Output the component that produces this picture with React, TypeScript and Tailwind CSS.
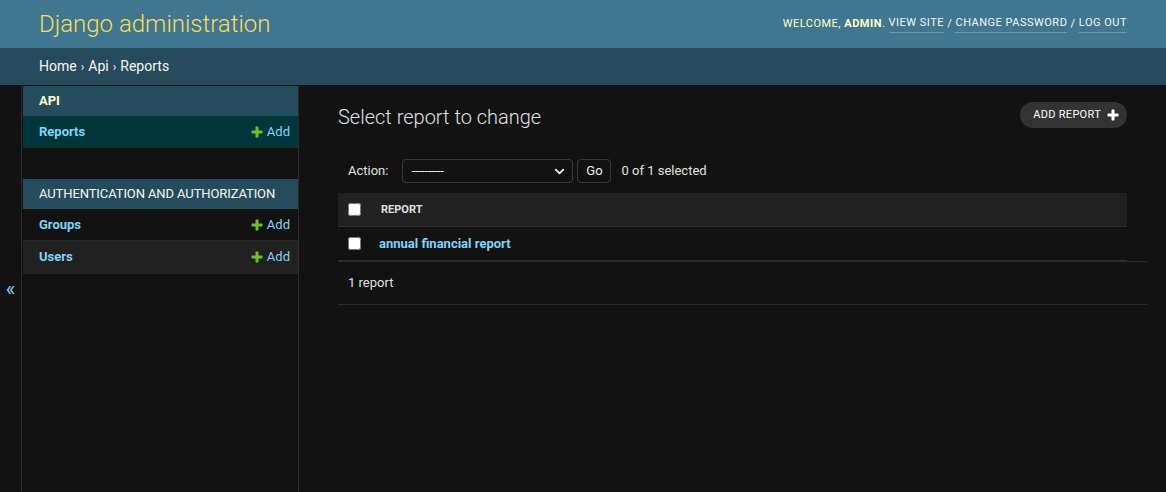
import React from "react";
import { ChevronDown } from "lucide-react";

const PLUS =
  "M1600 796v192q0 40-28 68t-68 28h-416v416q0 40-28 68t-68 28h-192q-40 0-68-28t-28-68v-416h-416q-40 0-68-28t-28-68v-192q0-40 28-68t68-28h416v-416q0-40 28-68t68-28h192q40 0 68 28t28 68v416h416q40 0 68 28t28 68z";

const PlusIcon = ({ className, fill }: { className: string; fill: string }) => (
  <svg viewBox="0 0 1792 1792" className={className}>
    <path d={PLUS} fill={fill} />
  </svg>
);

const AddLink = () => (
  <span className="flex items-center gap-[3px] text-[13px] text-[#81d4fa]">
    <PlusIcon className="w-[14px] h-[14px]" fill="#70bf2b" />
    Add
  </span>
);

type Row = { name: string; bg: string; h: string };

const NavModule = ({
  title,
  current,
  rows,
}: {
  title: string;
  current?: boolean;
  rows: Row[];
}) => (
  <div className="mb-[31px]">
    <div
      className={
        current
          ? "h-[30px] flex items-center px-4 bg-[#264b5d] text-[13px] uppercase whitespace-nowrap font-bold text-[#ffffcc]"
          : "h-[30px] flex items-center px-4 bg-[#264b5d] text-[13px] tracking-[-0.1px] uppercase whitespace-nowrap text-[#f7f7f7]"
      }
    >
      {title}
    </div>
    {rows.map((r) => (
      <div
        key={r.name}
        className={`${r.h} flex items-center justify-between pl-4 pr-2 border-b border-[#272727] ${r.bg}`}
      >
        <span className="text-[13px] font-bold text-[#81d4fa]">{r.name}</span>
        <AddLink />
      </div>
    ))}
  </div>
);

const App = () => {
  return (
    <div className="min-h-[492px] bg-[#121212] font-[Roboto,sans-serif] text-[#eeeeee]">
      {/* header */}
      <div className="h-12 bg-[#417690] flex items-center justify-between px-[39px]">
        <div className="text-[24px] font-light text-[#f5dd5d] leading-none">
          Django administration
        </div>
        <div className="text-[11px] tracking-[0.5px] uppercase text-[#ffffcc] flex items-center">
          <span>Welcome,&nbsp;</span>
          <strong className="font-bold">admin</strong>
          <span>.&nbsp;</span>
          <a className="text-[#f7f7f7] border-b border-white/25">View site</a>
          <span>&nbsp;/&nbsp;</span>
          <a className="text-[#f7f7f7] border-b border-white/25">Change password</a>
          <span>&nbsp;/&nbsp;</span>
          <a className="text-[#f7f7f7] border-b border-white/25">Log out</a>
        </div>
      </div>

      {/* breadcrumbs */}
      <div className="h-[37px] bg-[#264b5d] flex items-center px-[39px] text-[14px] text-[#f7f7f7]">
        <span>Home</span>
        <span className="mx-[4px] text-[12px]">›</span>
        <span>Api</span>
        <span className="mx-[4px] text-[12px]">›</span>
        <span>Reports</span>
      </div>

      <div className="flex h-[407px]">
        {/* sidebar toggle */}
        <div className="w-[22px] shrink-0 border-r border-[#2c2c2c] flex items-center justify-center text-[20px] text-[#81d4fa]">
          «
        </div>

        {/* sidebar */}
        <div className="w-[277px] shrink-0 border-r border-[#2c2c2c] pl-px pt-px">
          <NavModule
            title="Api"
            current
            rows={[{ name: "Reports", bg: "bg-[#00363a]", h: "h-[32px]" }]}
          />
          <NavModule
            title="Authentication and Authorization"
            rows={[
              { name: "Groups", bg: "bg-[#121212]", h: "h-[32px]" },
              { name: "Users", bg: "bg-[#212121]", h: "h-[33px]" },
            ]}
          />
        </div>

        {/* content */}
        <div className="flex-1 pl-[39px] pr-[39px] pt-[17px]">
          <div className="flex items-center justify-between h-[26px]">
            <h1 className="text-[20px] font-light text-[#e0e0e0] mt-[3px]">
              Select report to change
            </h1>
            <button className="h-[26px] rounded-full bg-[#333333] pl-[13px] pr-[7px] flex items-center gap-[5px] text-[11px] tracking-[0.3px] uppercase text-white">
              Add report
              <PlusIcon className="w-[14px] h-[14px]" fill="#ffffff" />
            </button>
          </div>

          {/* actions */}
          <div className="mt-[31px] flex items-center pl-[10px] text-[13px]">
            <span className="text-[#e0e0e0] mr-[14px]">Action:</span>
            <div className="w-[171px] h-[24px] rounded-[4px] border border-[#3a3a3a] flex items-center justify-between pl-[8px] pr-[5px]">
              <span className="text-[#eeeeee] tracking-[-0.4px]">----------</span>
              <ChevronDown size={15} strokeWidth={3} color="#eeeeee" />
            </div>
            <button className="ml-[4px] w-[34px] h-[24px] rounded-[4px] border border-[#3a3a3a] text-[13px] text-[#eeeeee]">
              Go
            </button>
            <span className="ml-[10px] text-[#e0e0e0]">0 of 1 selected</span>
          </div>

          {/* results */}
          <div className="mt-[10px]">
            <div className="h-[34px] bg-[#212121] border-b border-[#303030] flex items-center pl-[10px]">
              <input type="checkbox" className="w-[13px] h-[13px] m-0" readOnly />
              <span className="ml-[20px] mt-[2px] text-[11px] font-bold uppercase text-[#e0e0e0]">
                Report
              </span>
            </div>
            <div className="h-[34px] border-b border-[#303030] flex items-center pl-[10px]">
              <input type="checkbox" className="w-[13px] h-[13px] m-0" readOnly />
              <span className="ml-[18px] text-[13px] font-bold text-[#81d4fa]">
                annual financial report
              </span>
            </div>
          </div>

          {/* paginator */}
          <div className="-mr-5 h-[44px] border-t border-b border-[#2a2a2a] flex items-center pl-[10px] text-[13px] text-[#e0e0e0]">
            1 report
          </div>
        </div>
      </div>
    </div>
  );
};

export default App;
